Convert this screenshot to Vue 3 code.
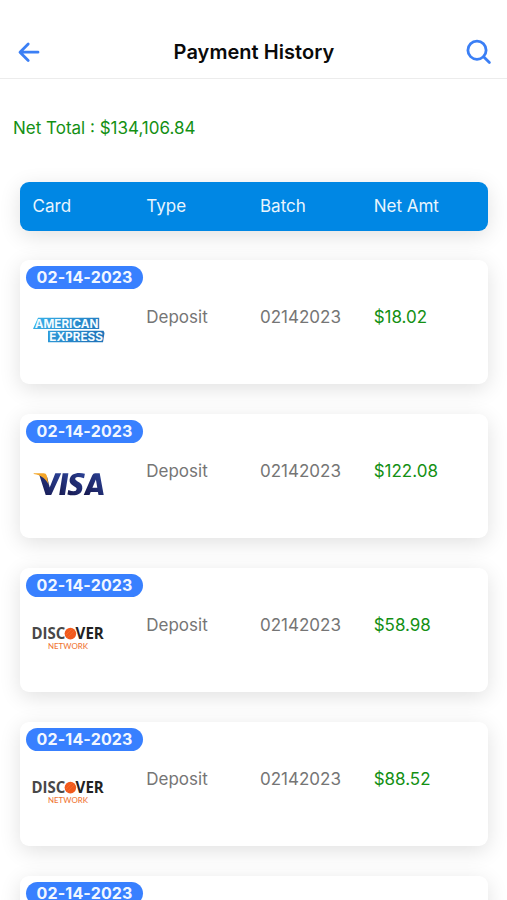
<template>
  <div class="page">
    <header class="toolbar">
      <button class="icon-btn" aria-label="Back">
        <svg width="24" height="24" viewBox="0 0 24 24">
          <path d="M11.2 4 L3 12.2 L11.2 20.4 M3.4 12.2 H21" />
        </svg>
      </button>
      <h1>Payment History</h1>
      <button class="icon-btn" aria-label="Search">
        <svg width="26" height="26" viewBox="0 0 26 26">
          <circle cx="11" cy="11.2" r="9.1" />
          <path d="M17.6 17.8 L23.4 23.6" />
        </svg>
      </button>
    </header>

    <main>
      <p class="net-total">Net Total : $134,106.84</p>

      <div class="row table-head">
        <span>Card</span>
        <span>Type</span>
        <span>Batch</span>
        <span>Net Amt</span>
      </div>

      <section v-for="(item, i) in payments" :key="i" class="card">
        <div class="badge"><span>{{ item.date }}</span></div>
        <div v-if="item.card" class="row">
          <div class="brand">
            <svg v-if="item.card === 'amex'" width="76" height="32" viewBox="0 0 76 32">
              <defs>
                <linearGradient :id="'amex' + i" x1="0" y1="0" x2="1" y2="0.3">
                  <stop offset="0" stop-color="#38b2ea" />
                  <stop offset="1" stop-color="#2076bc" />
                </linearGradient>
              </defs>
              <path d="M6 4.8 H67.2 V16 H1 Z M16 17.8 H71.5 L72.5 20 L71 29.2 H16 Z" :fill="`url(#amex${i})`" />
              <g class="amex-text">
                <text x="2.8" y="14.6" textLength="63.5" lengthAdjust="spacingAndGlyphs">AMERICAN</text>
                <text x="17.3" y="27.7" textLength="53.7" lengthAdjust="spacingAndGlyphs">EXPRESS</text>
              </g>
            </svg>

            <svg v-else-if="item.card === 'visa'" width="76" height="32" viewBox="0 0 76 32">
              <defs>
                <linearGradient :id="'visa' + i" x1="0" y1="1" x2="1" y2="0">
                  <stop offset="0" stop-color="#17184e" />
                  <stop offset="1" stop-color="#2b4297" />
                </linearGradient>
              </defs>
              <g transform="translate(-0.3 1)">
                <g :fill="`url(#visa${i})`">
                  <path d="M7.3 6 L14 27 H19.5 L29.5 5.3 H23.6 L18 19.5 L15.5 9.2 Q13 7 7.3 6 Z" />
                  <path d="M31 5.3 H36.7 L33.2 27 H27.5 Z" />
                  <path d="M53.2 5.7 L52.3 10.2 Q43.5 7.4 43.5 11 C43.5 13.5 51.4 14 50.6 20.4 C49.8 27.7 41.6 28.3 35.7 26.4 L36.6 21.9 Q44.5 25 45 20.9 C45.2 18.3 37.2 17.7 37.9 11.8 C38.6 5 46.7 3.8 53.2 5.7 Z" />
                  <path fill-rule="evenodd" d="M63.4 5.3 H68 L72 27 H66.8 L66.2 24 H59 L57.8 27 H52 L60.6 7.2 Q61.5 5.3 63.4 5.3 Z M64.2 11.4 L60.7 19.8 H65.6 Z" />
                </g>
                <path class="visa-flick" d="M2 5.3 H12 Q14.4 5.3 15 7.6 L17 17.2 C14.6 10.9 9.8 7.3 2 6.1 Z" />
              </g>
            </svg>

            <svg v-else width="76" height="32" viewBox="0 0 76 32">
              <g class="discover-text">
                <text x="-0.6" y="18.2" textLength="33.8" lengthAdjust="spacingAndGlyphs">DISC</text>
                <text class="dark" x="43.6" y="18.2" textLength="28.2" lengthAdjust="spacingAndGlyphs">VER</text>
              </g>
              <circle cx="38.4" cy="12.6" r="5.8" fill="#f1591d" />
              <path d="M34 14 L40 8 M35.4 16.6 L42.4 9.6" stroke="#f46a2a" stroke-width="1" />
              <text class="network" x="16" y="28.4" textLength="40" lengthAdjust="spacingAndGlyphs">NETWORK</text>
            </svg>
          </div>
          <span>{{ item.type }}</span>
          <span>{{ item.batch }}</span>
          <span class="amount">{{ item.amount }}</span>
        </div>
      </section>
    </main>
  </div>
</template>

<script setup>
const payments = [
  { date: '02-14-2023', card: 'amex', type: 'Deposit', batch: '02142023', amount: '$18.02' },
  { date: '02-14-2023', card: 'visa', type: 'Deposit', batch: '02142023', amount: '$122.08' },
  { date: '02-14-2023', card: 'discover', type: 'Deposit', batch: '02142023', amount: '$58.98' },
  { date: '02-14-2023', card: 'discover', type: 'Deposit', batch: '02142023', amount: '$88.52' },
  { date: '02-14-2023' }
];
</script>

<style>
body { margin: 0; background: #fff; overflow: hidden; }
</style>

<style scoped>
.page {
  height: 900px; overflow: hidden; background: #fff;
  font-family: Inter, "Liberation Sans", sans-serif; font-size: 17px;
}
.toolbar {
  display: flex; align-items: center; justify-content: space-between;
  box-sizing: border-box; height: 79px; padding: 25px 15px 0 17px;
  border-bottom: 1px solid #ececec;
}
.toolbar h1 { margin: 0 0 0 1px; font-size: 20px; font-weight: 600; line-height: 24px; color: #0a0a0a; letter-spacing: 0.05px; }
.icon-btn { display: flex; padding: 0; border: none; background: none; }
.icon-btn svg {
  fill: none; stroke: #3b7ff5; stroke-width: 2.8;
  stroke-linecap: round; stroke-linejoin: round;
}
.net-total { margin: 0; padding: 37px 13px 0; line-height: 24px; color: #149014; }
.row { display: grid; grid-template-columns: 113.7px 113.7px 113.7px 1fr; }
.table-head {
  box-sizing: border-box; height: 49px; margin: 42px 19.5px 0 20.3px; padding-left: 12.3px;
  border-radius: 9px; background: #0087e4; color: #e9f5fd; line-height: 49px;
  box-shadow: 0 5px 21px rgba(0,0,0,0.12);
}
.card {
  box-sizing: border-box; height: 124px; margin: 30px 19.5px 0 20.3px; padding: 6px 0 0 6px;
  border-radius: 9px; background: #fff; color: #757575;
  box-shadow: 0 5px 21px rgba(0,0,0,0.12);
}
.table-head + .card { margin-top: 29px; }
.badge {
  width: 116.5px; height: 23px; border-radius: 12px; background: #3880ff; color: #f2f7ff;
  font-size: 16px; font-weight: 700; line-height: 23px; text-align: center; letter-spacing: 0.15px;
}
.card .row { padding: 16px 0 0 6.3px; line-height: 24px; }
.brand { padding-top: 8px; height: 32px; }
.brand svg { display: block; margin-left: -1px; }
.amount { color: #149014; }
.amex-text { font: 700 11.5px Inter, sans-serif; fill: #f4fbff; }
.visa-flick { fill: #f4a629; }
.discover-text { font: 700 15.5px "Open Sans", sans-serif; fill: #484848; }
.discover-text .dark { fill: #222; }
.network { font: 500 8px Lato, sans-serif; fill: #f07636; }
</style>
